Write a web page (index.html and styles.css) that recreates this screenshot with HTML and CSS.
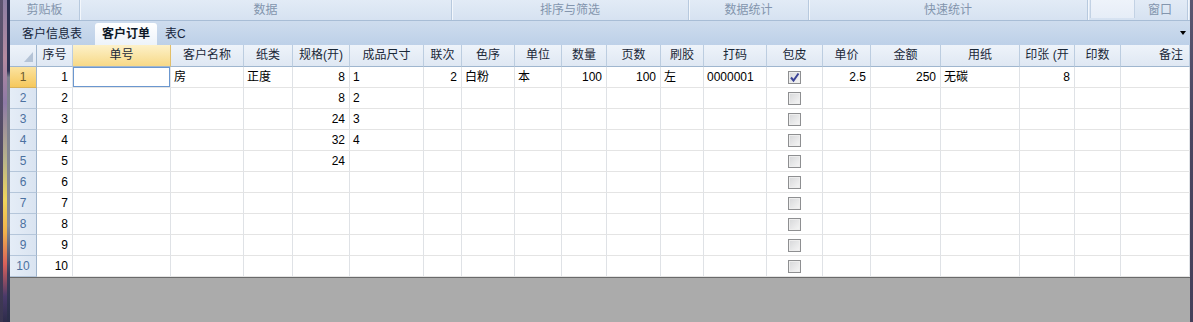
FILE: index.html
```html
<!DOCTYPE html>
<html lang="zh">
<head>
<meta charset="utf-8">
<title>客户订单</title>
<link rel="stylesheet" href="styles.css">
</head>
<body>
<div class="window">
  <div class="frame-l"><div class="fl1"></div><div class="fl2"></div><div class="fl3"></div></div>
  <div class="app">
    <div class="ribbon">
      <div class="rg g1">剪贴板</div>
      <div class="rg g2">数据</div>
      <div class="rg g3">排序与筛选</div>
      <div class="rg g4">数据统计</div>
      <div class="rg g5">快速统计</div>
      <div class="rg g6"><span class="rbox"></span><span class="rlabel">窗口</span></div>
    </div>
    <div class="tabs">
      <div class="tab t1">客户信息表</div>
      <div class="tab active">客户订单</div>
      <div class="tab t3">表C</div>
      <div class="tab-drop"></div>
    </div>
    <div class="grid">
      <div class="h corner"><svg width="9" height="10" viewBox="0 0 9 10"><path d="M9 0V10H0Z" fill="#b4c3d6"/></svg></div>
      <div class="h">序号</div><div class="h sel">单号</div><div class="h">客户名称</div><div class="h">纸类</div><div class="h">规格(开)</div><div class="h">成品尺寸</div><div class="h">联次</div><div class="h">色序</div><div class="h">单位</div><div class="h">数量</div><div class="h">页数</div><div class="h">刷胶</div><div class="h">打码</div><div class="h">包皮</div><div class="h">单价</div><div class="h">金额</div><div class="h">用纸</div><div class="h">印张 (开</div><div class="h">印数</div><div class="h hr">备注</div>

      <div class="rh on">1</div><div class="r">1</div><div class="act"></div><div>房</div><div>正度</div><div class="r">8</div><div>1</div><div class="r">2</div><div>白粉</div><div>本</div><div class="r">100</div><div class="r">100</div><div>左</div><div>0000001</div><div class="c"><span class="cb"><svg width="11" height="11" viewBox="0 0 11 11"><path d="M2 5.5L4.5 8.5L9.5 1.5" fill="none" stroke="#3b4396" stroke-width="2"/></svg></span></div><div class="r">2.5</div><div class="r">250</div><div>无碳</div><div class="r">8</div><div></div><div></div>

      <div class="rh">2</div><div class="r">2</div><div></div><div></div><div></div><div class="r">8</div><div>2</div><div></div><div></div><div></div><div></div><div></div><div></div><div></div><div class="c"><span class="cb"></span></div><div></div><div></div><div></div><div></div><div></div><div></div>

      <div class="rh">3</div><div class="r">3</div><div></div><div></div><div></div><div class="r">24</div><div>3</div><div></div><div></div><div></div><div></div><div></div><div></div><div></div><div class="c"><span class="cb"></span></div><div></div><div></div><div></div><div></div><div></div><div></div>

      <div class="rh">4</div><div class="r">4</div><div></div><div></div><div></div><div class="r">32</div><div>4</div><div></div><div></div><div></div><div></div><div></div><div></div><div></div><div class="c"><span class="cb"></span></div><div></div><div></div><div></div><div></div><div></div><div></div>

      <div class="rh">5</div><div class="r">5</div><div></div><div></div><div></div><div class="r">24</div><div></div><div></div><div></div><div></div><div></div><div></div><div></div><div></div><div class="c"><span class="cb"></span></div><div></div><div></div><div></div><div></div><div></div><div></div>

      <div class="rh">6</div><div class="r">6</div><div></div><div></div><div></div><div></div><div></div><div></div><div></div><div></div><div></div><div></div><div></div><div></div><div class="c"><span class="cb"></span></div><div></div><div></div><div></div><div></div><div></div><div></div>

      <div class="rh">7</div><div class="r">7</div><div></div><div></div><div></div><div></div><div></div><div></div><div></div><div></div><div></div><div></div><div></div><div></div><div class="c"><span class="cb"></span></div><div></div><div></div><div></div><div></div><div></div><div></div>

      <div class="rh">8</div><div class="r">8</div><div></div><div></div><div></div><div></div><div></div><div></div><div></div><div></div><div></div><div></div><div></div><div></div><div class="c"><span class="cb"></span></div><div></div><div></div><div></div><div></div><div></div><div></div>

      <div class="rh">9</div><div class="r">9</div><div></div><div></div><div></div><div></div><div></div><div></div><div></div><div></div><div></div><div></div><div></div><div></div><div class="c"><span class="cb"></span></div><div></div><div></div><div></div><div></div><div></div><div></div>

      <div class="rh">10</div><div class="r">10</div><div></div><div></div><div></div><div></div><div></div><div></div><div></div><div></div><div></div><div></div><div></div><div></div><div class="c"><span class="cb"></span></div><div></div><div></div><div></div><div></div><div></div><div></div>
    </div>
    <div class="empty"></div>
  </div>
  <div class="frame-r"></div>
</div>
</body>
</html>
```
FILE: styles.css
```css
html, body {
  margin: 0;
  padding: 0;
}
body {
  width: 1193px;
  height: 322px;
  overflow: hidden;
  font-family: "Liberation Sans", "Noto Sans CJK SC", sans-serif;
  font-size: 12px;
  color: #000;
}
.window {
  display: flex;
  height: 322px;
}
.frame-l {
  width: 10px;
  flex: none;
  display: flex;
}
.fl1 {
  width: 3px;
  background: linear-gradient(#5d5470, #4f4862 60%, #3a3550);
}
.fl2 {
  width: 4px;
  background: linear-gradient(#8d7fa4 0%, #b58aa0 18%, #8e7aa6 32%, #b9b48a 50%, #f0d65c 62%, #f2b24a 72%, #d9605a 82%, #4a3a6a 92%, #2d2c4a 100%);
}
.fl3 {
  width: 3px;
  background: linear-gradient(#2d3152 0%, #2d3152 22%, #7b7f8d 24%, #8a8d96 70%, #3a3d5a 85%, #2a2d48 100%);
}
.frame-r {
  width: 3px;
  flex: none;
  background: linear-gradient(#5a5670, #4a4560 40%, #45405a);
}
.app {
  width: 1180px;
  flex: none;
  display: flex;
  flex-direction: column;
  background: #ffffff;
}

/* ribbon group captions */
.ribbon {
  height: 20px;
  flex: none;
  display: flex;
  background: linear-gradient(#e2ebf6, #d6e2f1);
  border-bottom: 1px solid #a8bdd6;
}
.rg {
  flex: none;
  display: flex;
  align-items: center;
  justify-content: center;
  color: #8395ad;
  line-height: 20px;
  border-right: 1px solid #b7c9de;
  box-shadow: 1px 0 0 #f3f7fc;
}
.g1 { width: 69px; }
.g2 { width: 371px; }
.g3 { width: 236px; }
.g4 { width: 119px; }
.g5 { width: 278px; }
.g6 {
  width: 99px;
  justify-content: flex-start;
}
.rbox {
  width: 45px;
  height: 18px;
  margin-left: 2px;
  align-self: flex-start;
  background: linear-gradient(#eef3fa, #e6edf7);
  border-left: 1px solid #c3d2e4;
  border-right: 1px solid #c3d2e4;
  box-sizing: border-box;
}
.rlabel {
  margin-left: 13px;
}

/* sheet tabs */
.tabs {
  height: 24px;
  flex: none;
  display: flex;
  align-items: flex-end;
  background: linear-gradient(#cedcee, #bdd0e8);
}
.tab {
  height: 22px;
  line-height: 22px;
  color: #15253a;
  white-space: nowrap;
}
.t1 {
  margin-left: 12px;
  margin-right: 13px;
}
.tab.active {
  padding: 0 7px;
  font-weight: bold;
  color: #0c1726;
  background: linear-gradient(#ffffff, #edf3fa);
  border-radius: 3px 3px 0 0;
}
.t3 {
  margin-left: 8px;
}
.tab-drop {
  margin-left: auto;
  margin-right: 4px;
  align-self: center;
  width: 0;
  height: 0;
  border-left: 3.5px solid transparent;
  border-right: 3.5px solid transparent;
  border-top: 4px solid #000;
}

/* grid */
.grid {
  flex: none;
  display: grid;
  grid-template-columns: 27px 36px 98px 73px 49px 57px 74px 38px 53px 47px 45px 54px 43px 63px 56px 48px 70px 79px 55px 46px 69px;
  grid-template-rows: 22px repeat(10, 21px);
  background: #fff;
}
.grid > div {
  box-sizing: border-box;
  border-right: 1px solid #dfe2e6;
  border-bottom: 1px solid #e4e4e4;
  padding: 0 3px;
  line-height: 20px;
  white-space: nowrap;
  overflow: hidden;
}
.grid > .r {
  text-align: right;
  padding-right: 4px;
}
.grid > .c {
  display: flex;
  align-items: center;
  justify-content: center;
}
.grid > .h {
  line-height: 21px;
  text-align: center;
  color: #1a2838;
  background: linear-gradient(#eef3fa, #dfe8f3);
  border-right: 1px solid #bccde0;
  border-bottom: 1px solid #9fb6cf;
}
.grid > .h.sel {
  background: linear-gradient(#fdf1c9, #f7d987);
  border-right-color: #e3bf68;
}
.grid > .h.hr {
  text-align: right;
  padding-right: 6px;
}
.grid > .corner {
  display: flex;
  justify-content: flex-end;
  align-items: flex-end;
  padding: 0 3px 4px 0;
  border-right-color: #9fb6cf;
}
.grid > .rh {
  padding: 0;
  text-align: center;
  color: #4c71a0;
  background: linear-gradient(90deg, #e5edf7, #dae4f1);
  border-right: 1px solid #9fb4cc;
  border-bottom: 1px solid #b5c6da;
}
.grid > .rh.on {
  color: #6b5a2c;
  background: linear-gradient(#fbe3a0, #f6c85c);
  border-bottom-color: #d9b25a;
}
.grid > .act {
  box-shadow: inset 0 0 0 1px #6b97cf;
}
.cb {
  width: 13px;
  height: 13px;
  box-sizing: border-box;
  border: 1px solid #8e8f91;
  background: linear-gradient(135deg, #d6d7d9, #f6f6f6);
  box-shadow: inset 0 0 0 1px #eeeeee;
  display: flex;
  align-items: center;
  justify-content: center;
}
.empty {
  flex: 1;
  background: #ababab;
  border-top: 1px solid #6a6a6a;
}
```
